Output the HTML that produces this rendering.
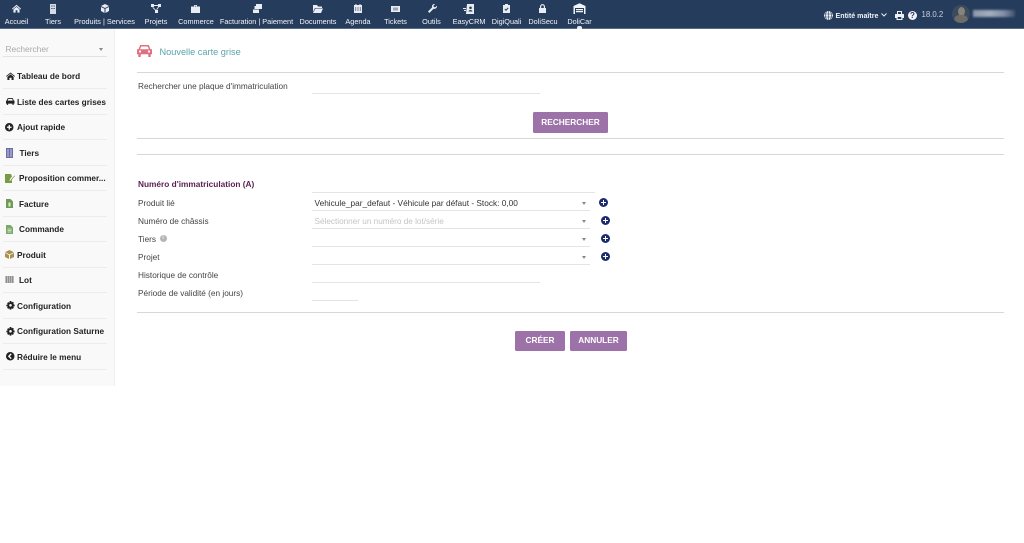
<!DOCTYPE html>
<html lang="fr"><head><meta charset="utf-8"><title>Nouvelle carte grise</title>
<style>
html,body{margin:0;padding:0;width:1024px;height:543px;overflow:hidden;background:#fff;font-family:"Liberation Sans",sans-serif;color:#333}
#nav{position:absolute;left:0;top:0;width:1024px;height:28px;background:#263c5c;border-bottom:1px solid #5a6a80}
#side{position:absolute;left:0;top:29px;width:114px;height:357px;background:#f9f9f9;border-right:1px solid #f0f0f0}
.n{position:absolute;top:16.5px;font-size:7.3px;line-height:9px;color:#f2f5f8;white-space:nowrap;transform:translateX(-50%)}
.i{position:absolute;overflow:visible}
.m{position:absolute;left:17px;font-size:8.25px;line-height:11px;font-weight:bold;color:#222;white-space:nowrap}
.d{position:absolute;left:3px;width:104px;height:1px;background:#ececec}
.l{position:absolute;left:138px;font-size:8.25px;line-height:11px;color:#444;white-space:nowrap}
.h{position:absolute;height:1px;background:#d8d8d8}
.u{position:absolute;height:1px;background:#e4e4e4}
.b{position:absolute;background:#9c72a8;color:#fff;font-size:8.3px;font-weight:bold;text-align:center;border-radius:1.5px;white-space:nowrap}
.c{position:absolute;left:582px;width:0;height:0;border-left:2.5px solid transparent;border-right:2.5px solid transparent;border-top:3px solid #888}
.p{position:absolute;width:9px;height:9px;border-radius:50%;background:#1c2a6e}
.p:before{content:"";position:absolute;left:2px;top:3.7px;width:5px;height:1.6px;background:#fff}
.p:after{content:"";position:absolute;left:3.7px;top:2px;width:1.6px;height:5px;background:#fff}
</style></head><body>
<div id="nav">
<svg class="i" style="left:12px;top:4px" width="9" height="9" viewBox="0 0 10 10"><path d="M5 .8 0 5.2l.7.8L5 2.3 9.300 6l.7-.8ZM1.600 6v3.600h2.400V7h2v2.600h2.400V6L5 3.200Z" fill="#e8edf3"/></svg>
<div class="n" style="left:16.500px">Accueil</div>
<svg class="i" style="left:49px;top:4px" width="8" height="10" viewBox="0 0 8 10"><path d="M1 0h6v10H1Z" fill="#d5dce6"/><path d="M2.300 1.500h1.200v1H2.300ZM4.500 1.500h1.200v1H4.500ZM2.300 4h1.200v1H2.300ZM4.500 4h1.200v1H4.500Z" fill="#263c5c"/></svg>
<div class="n" style="left:53px">Tiers</div>
<svg class="i" style="left:101px;top:4px" width="8" height="9" viewBox="0 0 8 9"><path d="M4 0 8 2 4 4 0 2ZM0 3l3.500 1.800V9L0 7ZM8 3 4.500 4.800V9L8 7Z" fill="#e8edf3"/></svg>
<div class="n" style="left:104.500px">Produits | Services</div>
<svg class="i" style="left:151px;top:4px" width="10" height="9" viewBox="0 0 10 9"><path d="M0 0h3v3H0ZM7 0h3v3H7ZM4 6h3v3H4ZM3 1h4v1H3ZM2 3l3 3-.6.6-3-3ZM8 3 6 6l-.7-.5 2-3Z" fill="#e8edf3"/></svg>
<div class="n" style="left:156px">Projets</div>
<svg class="i" style="left:191px;top:5px" width="9" height="8" viewBox="0 0 9 8"><path d="M3 0h3v1.500h3V8H0V1.500h3ZM3.800.8v.7h1.400V.8Z" fill="#e8edf3"/></svg>
<div class="n" style="left:196px">Commerce</div>
<svg class="i" style="left:253px;top:4px" width="9" height="9" viewBox="0 0 9 9"><path d="M3 0h6v5H7.500V2H3ZM1.500 2h6v3h-6ZM0 5.500h6V9H0Z" fill="#e8edf3"/></svg>
<div class="n" style="left:256.500px">Facturation | Paiement</div>
<svg class="i" style="left:313px;top:5px" width="10" height="8" viewBox="0 0 10 8"><path d="M0 0h4l1 1.500h4V3H2L0 7ZM2.500 3.500H10L8 8H0Z" fill="#e8edf3"/></svg>
<div class="n" style="left:318px">Documents</div>
<svg class="i" style="left:354px;top:4px" width="8" height="9" viewBox="0 0 8 9"><path d="M1.500 0h1v1h3V0h1v1H8v8H0V1h1.500Z" fill="#e8edf3"/><path d="M1 3.500h1.200v1H1ZM3.400 3.500h1.200v1H3.400ZM5.800 3.500H7v1H5.800ZM1 5.500h1.200v1H1ZM3.400 5.500h1.200v1H3.400ZM5.800 5.500H7v1H5.800Z" fill="#263c5c"/></svg>
<div class="n" style="left:358px">Agenda</div>
<svg class="i" style="left:391px;top:6px" width="9" height="6" viewBox="0 0 9 6"><path d="M0 0h9v6H0Z" fill="#e8edf3"/><path d="M2 1.500h5v3H2Z" fill="#9aa6b6"/></svg>
<div class="n" style="left:395.500px">Tickets</div>
<svg class="i" style="left:428px;top:4px" width="9" height="9" viewBox="0 0 9 9"><path d="M9 1.800 7.200 3.300 5.800 3l-.3-1.300L7 0C5.500-.3 4 .8 4 2.300c0 .4 0 .7.200 1L0 7.500 1.400 9l4.200-4.200c1.800.6 3.700-1 3.400-3Z" fill="#e8edf3"/></svg>
<div class="n" style="left:431.500px">Outils</div>
<svg class="i" style="left:463px;top:4px" width="11" height="10" viewBox="0 0 11 10"><path d="M4 0h7v10H3ZM0 4h3v1H0ZM1 6h2v1H1Z" fill="#e8edf3"/><circle cx="7.500" cy="3.800" r="1.300" fill="#263c5c"/><path d="M5.500 7.500c.3-2 3.700-2 4 0Z" fill="#263c5c"/></svg>
<div class="n" style="left:469px">EasyCRM</div>
<svg class="i" style="left:503px;top:4px" width="7" height="9" viewBox="0 0 7 9"><path d="M2 0h3v1h2v8H0V1h2Z" fill="#e8edf3"/><path d="m1.800 5 1.200 1.300 2.200-2.400" stroke="#263c5c" fill="none"/></svg>
<div class="n" style="left:506.500px">DigiQuali</div>
<svg class="i" style="left:539px;top:4px" width="7" height="9" viewBox="0 0 7 9"><path d="M1 4V2.600a2.500 2.500 0 0 1 5 0V4h1v5H0V4Zm1.200 0h2.600V2.600a1.300 1.300 0 0 0-2.600 0Z" fill="#e8edf3"/></svg>
<div class="n" style="left:543px">DoliSecu</div>
<svg class="i" style="left:573px;top:3px" width="13" height="11" viewBox="0 0 13 11"><path d="M.5 3 6.500.3 12.500 3v8h-1.500V5H2v6H.5ZM3 6h7v1.300H3ZM3 8h7v1.300H3Z" fill="#f2f4f7"/></svg>
<div class="n" style="left:579.500px">DoliCar</div>
<div style="position:absolute;left:577px;top:26px;width:5px;height:3px;background:#e8edf3;border-radius:2px 2px 0 0"></div>
<svg class="i" style="left:824px;top:10.500px" width="9" height="9" viewBox="0 0 9 9"><circle cx="4.500" cy="4.500" r="4.500" fill="#eef1f5"/><path d="M0 3h9M0 6h9M4.500 0v9M2.500.5c-1.300 2.500-1.300 5.500 0 8M6.500.5c1.300 2.500 1.300 5.500 0 8" stroke="#263c5c" stroke-width=".6" fill="none"/></svg>
<div style="position:absolute;left:835.500px;top:10.500px;font-size:7.100px;line-height:10px;font-weight:bold;color:#f0f3f7;white-space:nowrap">Entité maître</div>
<svg class="i" style="left:881px;top:13px" width="6" height="4" viewBox="0 0 6 4"><path d="m.5.500 2.500 2.500L5.500.500" stroke="#e8edf3" fill="none"/></svg>
<svg class="i" style="left:895px;top:10.500px" width="9" height="9" viewBox="0 0 9 9"><path d="M2 0h5v3h1.500A.5.500 0 0 1 9 3.500V7H7.500v2h-6V7H0V3.500A.5.500 0 0 1 .5 3H2Zm1 1v2h3V1ZM2.700 6v2h3.600V6Z" fill="#eef1f5"/></svg>
<div style="position:absolute;left:908px;top:10.500px;width:9px;height:9px;border-radius:50%;background:#eef1f5;color:#263c5c;font-size:8px;line-height:9px;font-weight:bold;text-align:center">?</div>
<div style="position:absolute;left:921.500px;top:9.500px;font-size:7.800px;line-height:10px;color:#c9d1dc;white-space:nowrap">18.0.2</div>
<div style="position:absolute;left:952px;top:5px;width:18px;height:18px;border-radius:50%;background:#3c4a5c;overflow:hidden"><div style="position:absolute;left:5.500px;top:2px;width:7px;height:9px;border-radius:50%;background:#87827a"></div><div style="position:absolute;left:2px;top:10px;width:14px;height:9px;border-radius:5px 5px 0 0;background:#6d6c68"></div></div>
<div style="position:absolute;left:973px;top:9.500px;width:42px;height:7.500px;background:linear-gradient(90deg,#8b99ad,#a3aebd 40%,#7f8ea4 75%,#3c5070);filter:blur(1px)"></div>
</div>

<div id="side">
<div style="position:absolute;left:5.500px;top:14.500px;font-size:8.400px;line-height:11px;color:#aaa">Rechercher</div>
<div style="position:absolute;left:99px;top:19px;width:0;height:0;border-left:2.500px solid transparent;border-right:2.500px solid transparent;border-top:3px solid #888"></div>
<div style="position:absolute;left:3px;top:27px;width:104px;height:1px;background:#e2e2e2"></div>
<svg class="i" style="left:6px;top:42.500px" width="9" height="8" viewBox="0 0 10 9"><path d="M5 .5 0 4.700l.6.700L5 1.800l4.400 3.600.6-.7ZM1.500 5.500V9h2.300V6.500h2.400V9h2.300V5.500L5 2.700Z" fill="#222"/></svg>
<div class="m" style="top:42px">Tableau de bord</div>
<div class="d" style="top:59px"></div>
<svg class="i" style="left:6px;top:68.500px" width="8.500" height="7" viewBox="0 0 10 8"><path d="M2 0h6l1.200 3H10v3.500H9V8H7.500V6.500h-5V8H1V6.500H0V3h.8Zm.7 1-.8 2h6.200l-.8-2Z" fill="#222"/></svg>
<div class="m" style="top:67.500px">Liste des cartes grises</div>
<div class="d" style="top:84.500px"></div>
<svg class="i" style="left:5px;top:93.500px" width="8.500" height="8.500" viewBox="0 0 9 9"><circle cx="4.500" cy="4.500" r="4.500" fill="#222"/><path d="M2 4.500h5M4.500 2v5" stroke="#fff" stroke-width="1.400"/></svg>
<div class="m" style="top:93px">Ajout rapide</div>
<div class="d" style="top:110px"></div>
<svg class="i" style="left:6px;top:118.500px" width="7" height="10" viewBox="0 0 7 10"><path d="M0 0h7v10H0Z" fill="#6d6ba8"/><path d="M2 1v8M5 1v8" stroke="#c9c8e0"/></svg>
<div class="m" style="left:19.500px;top:118.500px">Tiers</div>
<div class="d" style="top:135.500px"></div>
<svg class="i" style="left:5px;top:144.500px" width="10" height="9" viewBox="0 0 10 9"><path d="M0 0h6l1 2.500L5 5l-.5 2L7 6v3H0Z" fill="#7a9a45"/><path d="m5.500 6 4-4.500.5.500-4 4.500Z" fill="#7a9a45"/></svg>
<div class="m" style="left:19px;top:144px">Proposition commer...</div>
<div class="d" style="top:161px"></div>
<svg class="i" style="left:6px;top:170px" width="7" height="9" viewBox="0 0 7 9"><path d="M0 0h4.500L7 2.500V9H0Z" fill="#6f9a55"/><path d="M2.500 3.500h2v4h-2Z" fill="#dfe9d6"/></svg>
<div class="m" style="left:19px;top:169.500px">Facture</div>
<div class="d" style="top:186.500px"></div>
<svg class="i" style="left:6px;top:195.500px" width="7" height="9" viewBox="0 0 7 9"><path d="M0 0h4.500L7 2.500V9H0Z" fill="#7ba968"/><path d="M1.500 4h4M1.500 5.500h4M1.500 7h4" stroke="#e3eedd" stroke-width=".7"/></svg>
<div class="m" style="left:19px;top:195px">Commande</div>
<div class="d" style="top:212px"></div>
<svg class="i" style="left:5px;top:220.500px" width="9" height="9" viewBox="0 0 9 9"><path d="M4.500 0 9 2.200 4.500 4.400 0 2.200ZM0 3l4 2v4L0 7ZM9 3 5 5v4l4-2Z" fill="#a8924e"/></svg>
<div class="m" style="top:220.500px">Produit</div>
<div class="d" style="top:237.500px"></div>
<div style="position:absolute;left:5px;top:247px;width:9px;height:7px;background:repeating-linear-gradient(90deg,#bbb 0 1px,#8f8f8f 1px 2px)"></div>
<div class="m" style="left:19px;top:246px">Lot</div>
<div class="d" style="top:263px"></div>
<svg class="i" style="left:5.500px;top:272px" width="9" height="9" viewBox="0 0 9 9"><path d="M3.700 0h1.600l.3 1.400 1.200-.7 1.100 1.100-.7 1.200L8.600 3.700v1.600l-1.400.3.700 1.200-1.100 1.100-1.200-.7L5.300 8.600H3.700l-.3-1.400-1.200.7-1.100-1.100.7-1.200L.4 5.300V3.700l1.400-.3-.7-1.200 1.100-1.100 1.200.7Z" fill="#222"/><circle cx="4.500" cy="4.300" r="1.300" fill="#f9f9f9"/></svg>
<div class="m" style="top:271.500px">Configuration</div>
<div class="d" style="top:288.500px"></div>
<svg class="i" style="left:5.500px;top:297.500px" width="9" height="9" viewBox="0 0 9 9"><path d="M3.700 0h1.600l.3 1.400 1.200-.7 1.100 1.100-.7 1.200L8.600 3.700v1.600l-1.400.3.700 1.200-1.100 1.100-1.200-.7L5.300 8.600H3.700l-.3-1.400-1.200.7-1.100-1.100.7-1.200L.4 5.300V3.700l1.400-.3-.7-1.200 1.100-1.100 1.200.7Z" fill="#222"/><circle cx="4.500" cy="4.300" r="1.300" fill="#f9f9f9"/></svg>
<div class="m" style="top:297px">Configuration Saturne</div>
<div class="d" style="top:314px"></div>
<svg class="i" style="left:5.500px;top:323px" width="8.500" height="8.500" viewBox="0 0 9 9"><circle cx="4.500" cy="4.500" r="4.500" fill="#222"/><path d="M5.500 2 3 4.500 5.500 7" stroke="#fff" stroke-width="1.400" fill="none"/></svg>
<div class="m" style="top:322.500px">Réduire le menu</div>
<div class="d" style="top:340px"></div>
</div>

<svg class="i" style="left:137px;top:45px" width="15" height="12" viewBox="0 0 15 12"><path d="M3.200 0h8.600l1.700 4.200H15v5h-1.300V12h-2.400V9.200H3.700V12H1.300V9.200H0v-5h1.500Zm1 1.500L3.100 4.200h8.800l-1.100-2.700Z" fill="#e0707f"/><circle cx="3" cy="6.500" r="1.100" fill="#fff"/><circle cx="12" cy="6.500" r="1.100" fill="#fff"/></svg>
<div style="position:absolute;left:159.500px;top:45.500px;font-size:9.200px;line-height:12px;color:#5ba3a8;white-space:nowrap">Nouvelle carte grise</div>
<div class="h" style="left:137px;top:72px;width:867px"></div>
<div class="l" style="top:80.500px">Rechercher une plaque d'immatriculation</div>
<div class="u" style="left:312px;top:93px;width:228px"></div>
<div class="b" style="left:533px;top:112px;width:75px;height:21px;line-height:20px">RECHERCHER</div>
<div class="h" style="left:137px;top:138px;width:867px"></div>
<div class="h" style="left:137px;top:154px;width:867px"></div>
<div style="position:absolute;left:138px;top:178.500px;font-size:8.300px;line-height:11px;font-weight:bold;color:#5a1f4f;white-space:nowrap">Numéro d'immatriculation (A)</div>
<div class="l" style="top:197.500px">Produit lié</div>
<div class="l" style="top:215.500px">Numéro de châssis</div>
<div class="l" style="top:233.500px">Tiers</div>
<div style="position:absolute;left:159.500px;top:235px;width:7px;height:7px;border-radius:50%;background:#b5b5b5;color:#fff;font-size:6px;line-height:7px;text-align:center">i</div>
<div class="l" style="top:251.500px">Projet</div>
<div class="l" style="top:269.500px">Historique de contrôle</div>
<div class="l" style="top:287.500px">Période de validité (en jours)</div>

<div class="u" style="left:312px;top:192px;width:283px"></div>
<div style="position:absolute;left:314.500px;top:197.500px;font-size:8.300px;line-height:11px;color:#333;white-space:nowrap">Vehicule_par_defaut - Véhicule par défaut - Stock: 0,00</div>
<div class="c" style="top:202px"></div>
<div class="p" style="left:599px;top:198px"></div>
<div class="u" style="left:312px;top:210px;width:278px"></div>
<div style="position:absolute;left:314.500px;top:215.500px;font-size:8.200px;line-height:11px;color:#c4c4c4;white-space:nowrap">Sélectionner un numéro de lot/série</div>
<div class="c" style="top:220px"></div>
<div class="p" style="left:601px;top:216px"></div>
<div class="u" style="left:312px;top:228px;width:278px"></div>
<div class="c" style="top:238px"></div>
<div class="p" style="left:601px;top:234px"></div>
<div class="u" style="left:312px;top:246px;width:278px"></div>
<div class="c" style="top:256px"></div>
<div class="p" style="left:601px;top:252px"></div>
<div class="u" style="left:312px;top:264px;width:278px"></div>
<div class="u" style="left:312px;top:282px;width:228px"></div>
<div class="u" style="left:312px;top:300px;width:46px"></div>
<div class="h" style="left:137px;top:312px;width:867px"></div>
<div class="b" style="left:515px;top:331px;width:50px;height:20px;line-height:19px">CRÉER</div>
<div class="b" style="left:570px;top:331px;width:57px;height:20px;line-height:19px">ANNULER</div>
</body></html>
